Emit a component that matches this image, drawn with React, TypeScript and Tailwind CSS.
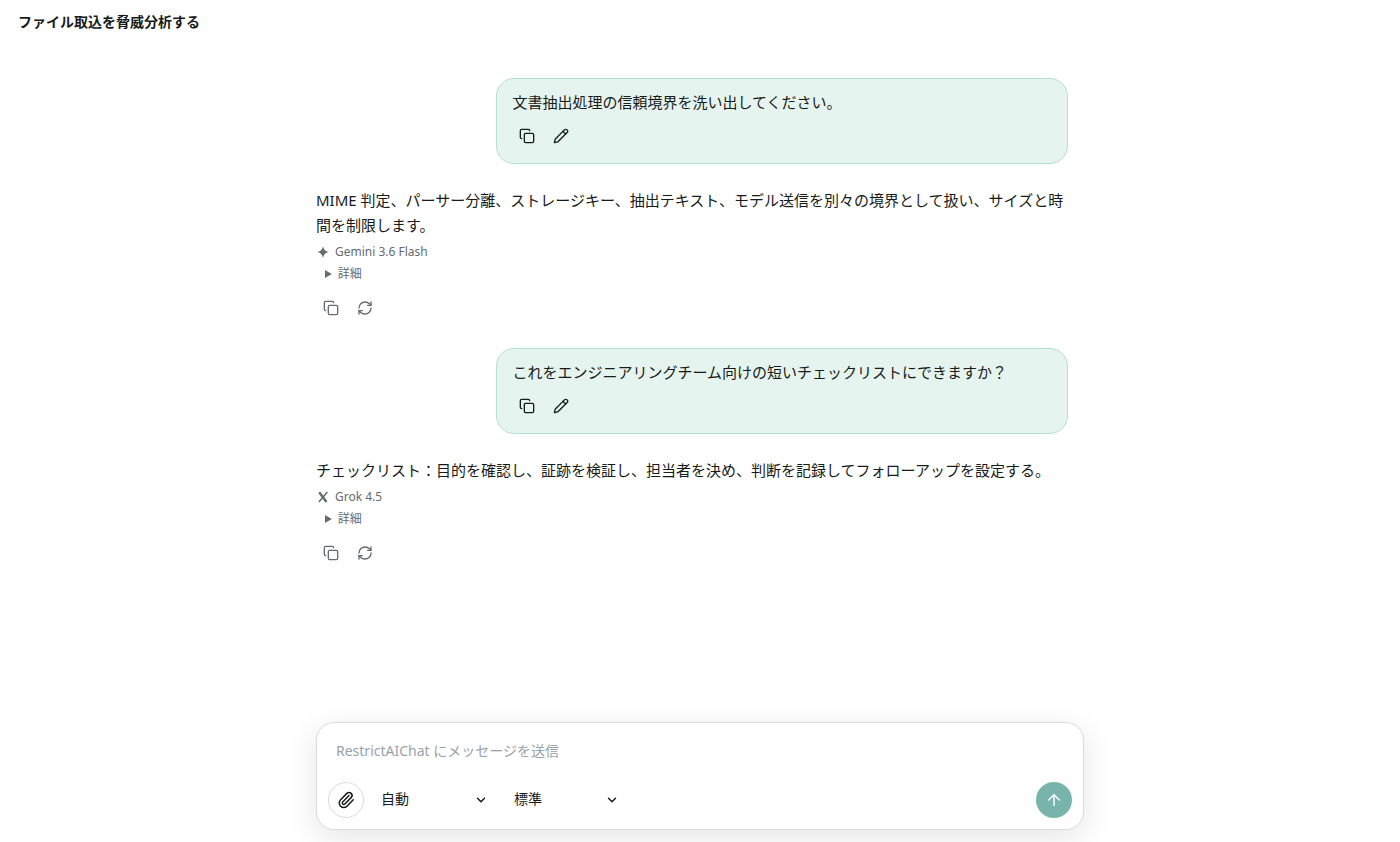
import { ReactNode } from "react";
import { ArrowUp, ChevronDown, Copy, Paperclip, Pencil, RefreshCw } from "lucide-react";

type Message = {
  id: number;
  role: "user" | "assistant";
  text: string;
  model?: { name: string; icon: ReactNode };
};

const GeminiIcon = () => (
  <svg width="14" height="14" viewBox="0 0 24 24" fill="currentColor" aria-hidden="true">
    <path d="M12 2c1.500 6 4 8.500 10 10-6 1.500-8.500 4-10 10-1.500-6-4-8.500-10-10 6-1.500 8.500-4 10-10z" />
  </svg>
);

const GrokIcon = () => (
  <svg width="14" height="14" viewBox="0 0 24 24" fill="none" stroke="currentColor" aria-hidden="true">
    <path d="M5.500 4l12.500 16.500" strokeWidth="4.200" />
    <path d="M19.500 3.500L5 20.500" strokeWidth="2.600" />
  </svg>
);

const messages: Message[] = [
  { id: 1, role: "user", text: "文書抽出処理の信頼境界を洗い出してください。" },
  {
    id: 2,
    role: "assistant",
    text: "MIME 判定、パーサー分離、ストレージキー、抽出テキスト、モデル送信を別々の境界として扱い、サイズと時間を制限します。",
    model: { name: "Gemini 3.6 Flash", icon: <GeminiIcon /> },
  },
  { id: 3, role: "user", text: "これをエンジニアリングチーム向けの短いチェックリストにできますか？" },
  {
    id: 4,
    role: "assistant",
    text: "チェックリスト：目的を確認し、証跡を検証し、担当者を決め、判断を記録してフォローアップを設定する。",
    model: { name: "Grok 4.5", icon: <GrokIcon /> },
  },
];

function IconButton({ label, children }: { label: string; children: ReactNode }) {
  return (
    <button type="button" aria-label={label} className="flex h-7 w-7 items-center justify-center rounded-lg hover:bg-black/5">
      {children}
    </button>
  );
}

function UserMessage({ message }: { message: Message }) {
  return (
    <article className="w-[76%] self-end rounded-[18px] border border-[#b5dfd2] bg-[#e6f4ef] px-[15px] pt-[11px] pb-[13px]">
      <p className="text-[15px] leading-[25px]">{message.text}</p>
      <div className="mt-[7px] flex gap-1.5 pl-px">
        <IconButton label="コピー">
          <Copy size={16} strokeWidth={2} />
        </IconButton>
        <IconButton label="編集">
          <Pencil size={16} strokeWidth={2} />
        </IconButton>
      </div>
    </article>
  );
}

function AssistantMessage({ message }: { message: Message }) {
  return (
    <article className="pb-0.5">
      <p className="text-[15px] leading-[25px]">{message.text}</p>
      <div className="text-[#666b70]">
        <div className="mt-1 flex h-5 items-center gap-[5px] text-xs">
          {message.model?.icon}
          <span>{message.model?.name}</span>
        </div>
        <details className="mt-0.5 pl-[9px] text-xs leading-5">
          <summary className="cursor-pointer">詳細</summary>
        </details>
        <div className="mt-2.5 flex gap-1.5 pl-px">
          <IconButton label="コピー">
            <Copy size={16} strokeWidth={2} />
          </IconButton>
          <IconButton label="再生成">
            <RefreshCw size={16} strokeWidth={2} />
          </IconButton>
        </div>
      </div>
    </article>
  );
}

function Picker({ label, options, className }: { label: string; options: string[]; className: string }) {
  return (
    <div className={`relative ${className}`}>
      <select aria-label={label} className="h-9 w-full appearance-none bg-transparent pr-8 pb-0.5 pl-[9px] text-sm outline-none">
        {options.map((option) => (
          <option key={option}>{option}</option>
        ))}
      </select>
      <ChevronDown size={14} strokeWidth={2.5} className="pointer-events-none absolute top-[11px] right-[9px]" />
    </div>
  );
}

function Composer() {
  return (
    <form
      onSubmit={(e) => e.preventDefault()}
      className="rounded-[18px] border border-[#d9dbdc] bg-white p-[11px] shadow-[0_8px_30px_rgba(0,0,0,0.1)]"
    >
      <textarea
        rows={1}
        aria-label="メッセージ"
        placeholder="RestrictAIChat にメッセージを送信"
        className="block h-10 w-full resize-none px-2 py-1.5 text-sm leading-[22px] outline-none placeholder:text-[#98a2ab]"
      />
      <div className="mt-2 flex items-center gap-2">
        <button
          type="button"
          aria-label="ファイルを添付"
          className="flex h-9 w-9 items-center justify-center rounded-full border border-[#d9dbdc]"
        >
          <Paperclip size={18} strokeWidth={2} />
        </button>
        <Picker label="モデル" options={["自動", "Gemini 3.6 Flash", "Grok 4.5"]} className="w-[125px]" />
        <Picker label="推論レベル" options={["標準", "高"]} className="w-[123px]" />
        <button
          type="submit"
          aria-label="送信"
          className="ml-auto flex h-9 w-9 items-center justify-center rounded-full bg-[#79b4ac] text-white"
        >
          <ArrowUp size={18} strokeWidth={2} />
        </button>
      </div>
    </form>
  );
}

export default function App() {
  return (
    <div
      lang="ja"
      className="flex h-screen flex-col overflow-hidden bg-white font-['Noto_Sans','Noto_Sans_CJK_JP',sans-serif] text-[#171b1a]"
    >
      <header className="flex h-11 shrink-0 items-center px-[18px]">
        <h1 className="text-sm font-bold">ファイル取込を脅威分析する</h1>
      </header>

      <main className="mx-auto flex min-h-0 w-full max-w-3xl flex-1 flex-col gap-6 pt-[34px] pr-4">
        {messages.map((message) =>
          message.role === "user" ? (
            <UserMessage key={message.id} message={message} />
          ) : (
            <AssistantMessage key={message.id} message={message} />
          )
        )}
      </main>

      <footer className="mx-auto w-full max-w-3xl shrink-0 pb-3">
        <Composer />
      </footer>
    </div>
  );
}
